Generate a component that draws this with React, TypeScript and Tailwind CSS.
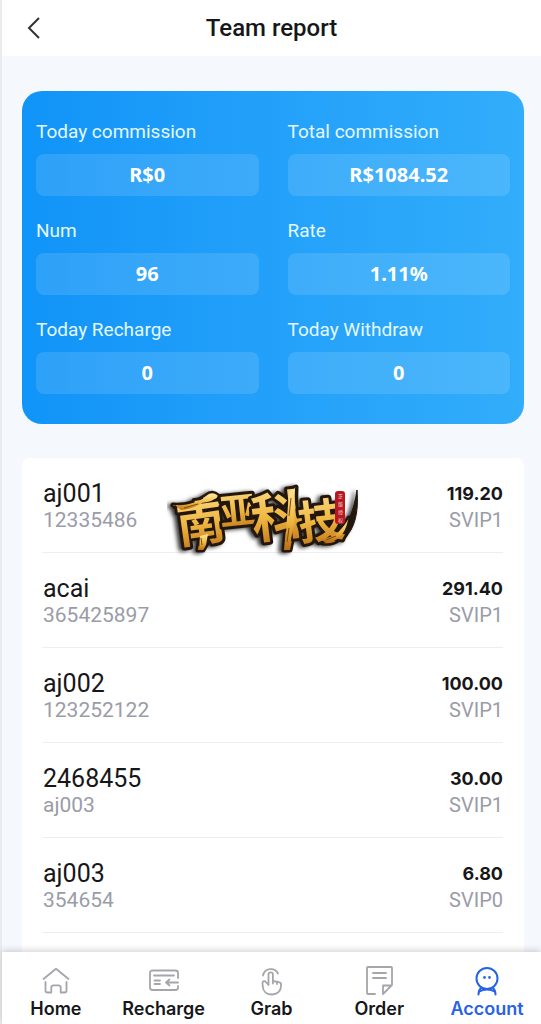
import type { ReactNode } from "react";

const stats = [
  { label: "Today commission", value: "R$0" },
  { label: "Total commission", value: "R$1084.52" },
  { label: "Num", value: "96" },
  { label: "Rate", value: "1.11%" },
  { label: "Today Recharge", value: "0" },
  { label: "Today Withdraw", value: "0" },
];

const members = [
  { name: "aj001", sub: "12335486", amount: "119.20", level: "SVIP1" },
  { name: "acai", sub: "365425897", amount: "291.40", level: "SVIP1" },
  { name: "aj002", sub: "123252122", amount: "100.00", level: "SVIP1" },
  { name: "2468455", sub: "aj003", amount: "30.00", level: "SVIP1" },
  { name: "aj003", sub: "354654", amount: "6.80", level: "SVIP0" },
];

const Icon = ({ children }: { children: ReactNode }) => (
  <svg
    className="h-8 w-8"
    viewBox="0 0 32 32"
    fill="none"
    stroke="currentColor"
    strokeWidth="1.8"
    strokeLinecap="round"
    strokeLinejoin="round"
    aria-hidden="true"
  >
    {children}
  </svg>
);

const tabs = [
  {
    label: "Home",
    icon: (
      <Icon>
        <path d="M3.500 14 16 3.800 28.500 14" />
        <path d="M5.500 17v8.500a2 2 0 0 0 2 2h3.800v-5a2.200 2.200 0 0 1 2.200-2.200h5a2.200 2.200 0 0 1 2.200 2.200v5h3.800a2 2 0 0 0 2-2V17" />
      </Icon>
    ),
  },
  {
    label: "Recharge",
    icon: (
      <Icon>
        <path d="M30 13V8a2.500 2.500 0 0 0-2.500-2.500h-23A2.500 2.500 0 0 0 2 8v14.500A2.500 2.500 0 0 0 4.500 25h23a2.500 2.500 0 0 0 2.500-2.500V21" />
        <path d="M6 10.500h20M6.500 15.500h5.500M6.500 19h5.500M30 17.500H18M21.500 14.500l-3.500 3 3.500 3" />
      </Icon>
    ),
  },
  {
    label: "Grab",
    icon: (
      <Icon>
        <path d="M8 10.500a8 8 0 0 1 15-2" />
        <path d="M13.500 20v-10.500a2.200 2.200 0 0 1 4.400 0V16l6 1.200a2.500 2.500 0 0 1 2.100 2.500v1.300c0 5-3.800 8.500-9 8.500s-8.700-3-9.200-7.500l-.3-4.200a1.800 1.800 0 0 1 3.300-.8l2.700 3" />
        <path d="M17.900 16v2.500M22 17v2" />
      </Icon>
    ),
  },
  {
    label: "Order",
    icon: (
      <Icon>
        <path d="M12 29H5a1 1 0 0 1-1-1V3a1 1 0 0 1 1-1h23a1 1 0 0 1 1 1v17l-9 9v-8.500h8.500" />
        <path d="M10 8h13M10 13h13" />
      </Icon>
    ),
  },
  {
    label: "Account",
    active: true,
    icon: (
      <Icon>
        <g strokeWidth="2">
          <circle cx="16" cy="13.500" r="10.500" />
          <path d="M10 23C8.300 24.500 7.500 26.500 7.500 29.500M22 23c1.700 1.500 2.500 3.500 2.500 6.500M8.500 26.500c4-2.600 11-2.600 15 0" />
        </g>
        <circle cx="13.500" cy="12.500" r="0.500" fill="currentColor" />
        <circle cx="18.500" cy="12.500" r="0.500" fill="currentColor" />
      </Icon>
    ),
  },
];

// brush lettered gold brand mark
const BrandMark = () => (
  <svg
    className="h-[92px] w-[212px]"
    viewBox="0 0 212 92"
    role="img"
    aria-label="南亚科技"
  >
    <defs>
      <linearGradient id="gold" x1="0" y1="0" x2="0" y2="1">
        <stop offset="0%" stopColor="#ffe596" />
        <stop offset="55%" stopColor="#efb640" />
        <stop offset="100%" stopColor="#b96d13" />
      </linearGradient>
      <filter id="shade" x="-10%" y="-10%" width="120%" height="120%">
        <feDropShadow dx="-3" dy="1" stdDeviation="2" floodColor="#000" floodOpacity="0.8" />
      </filter>
    </defs>
    <g filter="url(#shade)" stroke="#20180d" strokeLinejoin="round" paintOrder="stroke" fill="url(#gold)">
      {/* brush tips under the letters */}
      <g strokeWidth="5">
        <path d="M6 35c13 1 24-3 33-9 5-4 9-3 12 0-4 6-9 7-15 8-8 5-15 7-23 8l-3-4Z" />
        <path d="M33 66l8-2-2 11-3 5h-5Z" />
        <path d="M122 20l7-3-1 38-5 25h-6l3-33Z" />
        <path d="M146 67c14 4 26-1 36-19-3 19-13 27-26 25-5-1-8-3-10-6Z" />
      </g>
      <path d="M172 63c9-8 15-23 18-43 2 24-3 42-16 51Z" fill="#20180d" strokeWidth="1" />
      <g fontFamily="'Noto Sans CJK SC', sans-serif" fontWeight="700" strokeWidth="6">
        <text x="10" y="71" fontSize="48" transform="rotate(-8 33 54)">南</text>
        <text x="53" y="54" fontSize="36" transform="rotate(-6 70 42)">亚</text>
        <text x="84" y="66" fontSize="53" transform="rotate(-7 110 46)">科</text>
        <text x="131" y="68" fontSize="46" transform="rotate(-7 153 50)">技</text>
      </g>
    </g>
    <g fill="url(#gold)">
      <path d="M8 35c13 1 22-3 31-8 4-3 8-3 11 0-4 4-9 5-15 6-8 5-14 6-21 7Z" />
      <path d="M33 66l8-2-2 11-3 5h-4Z" />
      <path d="M122 22l6-4-1 36-5 26h-4l2-32Z" />
      <path d="M150 68c12 2 22-3 31-18-3 16-12 23-23 22Z" />
    </g>
    <path
      d="M17 38l14-4M34 68l1 7M124 28l-2 18M122 58l-2 14M159 70l10-4"
      stroke="#7d4a0d"
      strokeWidth="1"
    />
    <rect x="168" y="21" width="10" height="33" rx="3" fill="#b81622" />
    <g fontFamily="'Noto Sans CJK SC', sans-serif" fontSize="5" fill="#f6dccb">
      <text x="171" y="28">正</text>
      <text x="171" y="36">版</text>
      <text x="171" y="44">授</text>
      <text x="171" y="52">权</text>
    </g>
  </svg>
);

const App = () => {
  return (
    <div className="flex min-h-screen flex-col border-l-2 border-[#e9ebee] bg-[#f5f8fc] font-[Roboto,'Liberation_Sans',sans-serif] text-[#171719]">
      <header className="grid h-14 grid-cols-[64px_1fr_64px] items-center bg-white">
        <button type="button" aria-label="Back" className="flex h-full items-center pl-5">
          <svg
            className="h-6 w-6"
            viewBox="0 0 24 24"
            fill="none"
            stroke="#333"
            strokeWidth="2"
            aria-hidden="true"
          >
            <path d="M17 2 7 12l10 10" />
          </svg>
        </button>
        <h1 className="text-center text-[24px] leading-8 font-medium">Team report</h1>
      </header>

      <main className="flex flex-1 flex-col pt-[35px] pr-[17px] pl-5">
        <dl className="grid grid-cols-2 gap-x-[29px] gap-y-[23px] rounded-[20px] bg-linear-to-r from-[#1094f8] to-[#32adfb] px-3.5 pt-[29px] pb-[30px] text-white">
          {stats.map((s) => (
            <div key={s.label}>
              <dt className="text-[19px] leading-6 text-[#e4f8ff]">{s.label}</dt>
              <dd className="mt-2.5 flex h-[42px] items-center justify-center rounded-lg bg-white/12 font-['Noto_Sans',sans-serif] text-[20px] font-bold">
                {s.value}
              </dd>
            </div>
          ))}
        </dl>

        <section className="relative mt-[34px] flex-1 rounded-t-lg bg-white px-[21px]">
          <ul>
            {members.map((m) => (
              <li
                key={m.name}
                className="flex justify-between border-b border-[#eeeef0] pt-[22px] pb-5"
              >
                <div>
                  <p className="text-[25px] leading-7">{m.name}</p>
                  <p className="text-[21px] leading-6 text-[#9a9ca8]">{m.sub}</p>
                </div>
                <div className="text-right">
                  <p className="font-[Inter,sans-serif] text-[18px] leading-7 font-bold">{m.amount}</p>
                  <p className="text-[20px] leading-6 text-[#9a9ca8]">{m.level}</p>
                </div>
              </li>
            ))}
          </ul>
          <div className="pointer-events-none absolute inset-x-0 top-3 flex justify-center">
            <BrandMark />
          </div>
        </section>
      </main>

      <nav className="sticky bottom-0 grid h-[72px] grid-cols-5 bg-white shadow-[0_-2px_6px_rgba(0,0,0,0.16)]">
        {tabs.map((t) => (
          <a
            key={t.label}
            href="#"
            aria-current={t.active ? "page" : undefined}
            className={`flex flex-col items-center pt-[13px] ${t.active ? "text-[#2862e5]" : "text-[#a5a5ab]"}`}
          >
            {t.icon}
            <span
              className={`font-[Inter,sans-serif] text-[18px] leading-6 font-semibold ${t.active ? "" : "text-[#171719]"}`}
            >
              {t.label}
            </span>
          </a>
        ))}
      </nav>
    </div>
  );
};

export default App;
